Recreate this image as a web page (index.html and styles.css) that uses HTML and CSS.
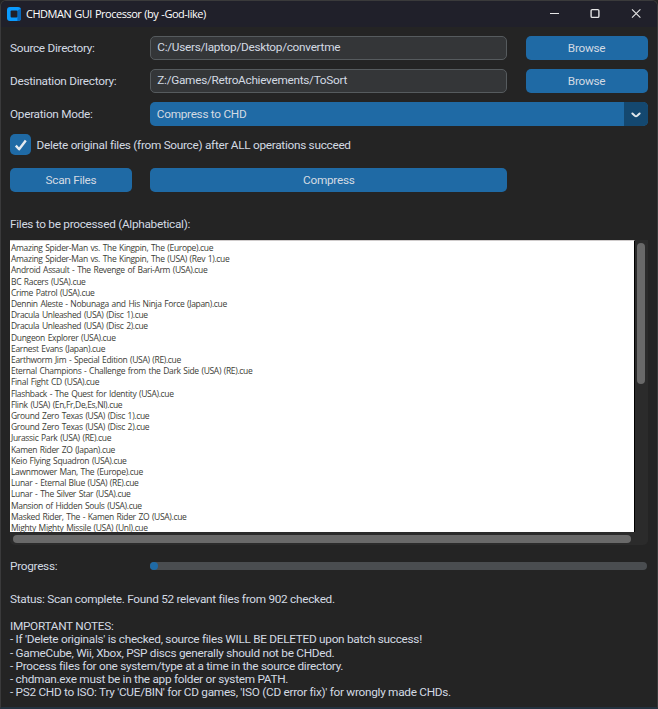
FILE: index.html
```html
<!DOCTYPE html>
<html lang="en">
<head>
<meta charset="utf-8">
<title>CHDMAN GUI Processor</title>
<link rel="stylesheet" href="styles.css">
</head>
<body>
<div class="window">
  <header class="titlebar">
    <svg class="logo" viewBox="0 0 14 14"><rect width="14" height="14" rx="3" fill="#0a9bff"/><path d="M10.4 3.6L14 1.5V11a3 3 0 0 1-3 3h-.6z" fill="#0869bd"/><rect x="3.6" y="3.6" width="6.8" height="6.8" rx="1" fill="#20202a"/></svg>
    <span class="title">CHDMAN GUI Processor (by -God-like)</span>
    <svg class="controls" viewBox="0 0 100 14" fill="none" stroke="#e6e6e6"><path d="M4 6.5h9" stroke-width="1.2"/><rect x="45.1" y="2.6" width="7.8" height="7.8" rx="1.2" stroke-width="1.4"/><path d="M86 2.3l8.4 8.4M94.4 2.3L86 10.7" stroke-width="1.1"/></svg>
  </header>
  <main class="content">
    <div class="form">
      <span class="label">Source Directory:</span>
      <div class="entry">C:/Users/laptop/Desktop/convertme</div>
      <button class="button">Browse</button>
      <span class="label">Destination Directory:</span>
      <div class="entry">Z:/Games/RetroAchievements/ToSort</div>
      <button class="button">Browse</button>
      <span class="label">Operation Mode:</span>
      <div class="select"><span class="value">Compress to CHD</span><span class="arrow"><svg viewBox="0 0 10 6"><path d="M1.4 1.5L3.8 3.7Q5 4.6 6.2 3.7L8.6 1.5" fill="none" stroke="#e1e7eb" stroke-width="2" stroke-linecap="round"/></svg></span></div>
    </div>
    <div class="check">
      <span class="box"><svg viewBox="0 0 21 21"><path d="M5.8 11.6l3.3 3.7L15.8 6.6" fill="none" stroke="#e4eaf0" stroke-width="2.4" stroke-linecap="butt" stroke-linejoin="round"/></svg></span>
      <span>Delete original files (from Source) after ALL operations succeed</span>
    </div>
    <div class="actions"><button class="button">Scan Files</button><button class="button">Compress</button></div>
    <div class="files-label">Files to be processed (Alphabetical):</div>
    <div class="files">
      <ul class="list">
        <li>Amazing Spider-Man vs. The Kingpin, The (Europe).cue</li>
        <li>Amazing Spider-Man vs. The Kingpin, The (USA) (Rev 1).cue</li>
        <li>Android Assault - The Revenge of Bari-Arm (USA).cue</li>
        <li>BC Racers (USA).cue</li>
        <li>Crime Patrol (USA).cue</li>
        <li>Dennin Aleste - Nobunaga and His Ninja Force (Japan).cue</li>
        <li>Dracula Unleashed (USA) (Disc 1).cue</li>
        <li>Dracula Unleashed (USA) (Disc 2).cue</li>
        <li>Dungeon Explorer (USA).cue</li>
        <li>Earnest Evans (Japan).cue</li>
        <li>Earthworm Jim - Special Edition (USA) (RE).cue</li>
        <li>Eternal Champions - Challenge from the Dark Side (USA) (RE).cue</li>
        <li>Final Fight CD (USA).cue</li>
        <li>Flashback - The Quest for Identity (USA).cue</li>
        <li>Flink (USA) (En,Fr,De,Es,Nl).cue</li>
        <li>Ground Zero Texas (USA) (Disc 1).cue</li>
        <li>Ground Zero Texas (USA) (Disc 2).cue</li>
        <li>Jurassic Park (USA) (RE).cue</li>
        <li>Kamen Rider ZO (Japan).cue</li>
        <li>Keio Flying Squadron (USA).cue</li>
        <li>Lawnmower Man, The (Europe).cue</li>
        <li>Lunar - Eternal Blue (USA) (RE).cue</li>
        <li>Lunar - The Silver Star (USA).cue</li>
        <li>Mansion of Hidden Souls (USA).cue</li>
        <li>Masked Rider, The - Kamen Rider ZO (USA).cue</li>
        <li>Mighty Mighty Missile (USA) (Unl).cue</li>
      </ul>
      <div class="vtrack"><div class="vthumb"></div></div>
      <div class="htrack"><div class="hthumb"></div></div>
    </div>
    <div class="progress"><span class="label">Progress:</span><div class="bar"><div class="fill"></div></div></div>
    <div class="status">Status: Scan complete. Found 52 relevant files from 902 checked.</div>
    <div class="notes">
      <div>IMPORTANT NOTES:</div>
      <div>- If 'Delete originals' is checked, source files WILL BE DELETED upon batch success!</div>
      <div>- GameCube, Wii, Xbox, PSP discs generally should not be CHDed.</div>
      <div>- Process files for one system/type at a time in the source directory.</div>
      <div>- chdman.exe must be in the app folder or system PATH.</div>
      <div>- PS2 CHD to ISO: Try 'CUE/BIN' for CD games, 'ISO (CD error fix)' for wrongly made CHDs.</div>
    </div>
  </main>
</div>
</body>
</html>
```
FILE: styles.css
```css
* { box-sizing: border-box; }
body { margin: 0; background: #242424; }
.window {
  width: 658px;
  height: 709px;
  border: 1px solid #3a3a3b;
  border-bottom: 2px solid #24323f;
  border-radius: 6px 6px 0 0;
  overflow: hidden;
  background: #242424;
  color: #d3dae3;
  font: 11.8px/14px Roboto, sans-serif;
  letter-spacing: -0.285px;
}
.titlebar {
  display: flex;
  align-items: center;
  height: 26px;
  padding: 0 11px 0 6px;
  background: #20202a;
}
.logo { width: 14px; height: 14px; }
.title {
  flex: 1;
  margin-left: 5px;
  color: #fff;
  font: 11px/14px "Open Sans", sans-serif;
  letter-spacing: -0.48px;
  word-spacing: 0.6px;
}
.controls { width: 100px; height: 14px; }
.content { padding: 9px 9px 0; }
.form {
  display: grid;
  grid-template-columns: 140.3px 375.3px 122px;
  grid-template-rows: repeat(3, 24px);
  row-gap: 9px;
  align-items: center;
}
.entry {
  width: 357px;
  height: 24px;
  padding: 0 6px;
  border: 1px solid #565b5e;
  border-radius: 5px;
  background: #343638;
  line-height: 21px;
}
.button {
  height: 24px;
  padding: 0 0 1px;
  border: 0;
  border-radius: 5px;
  background: #1f6aa5;
  color: #d3dae3;
  font: inherit;
  letter-spacing: inherit;
}
.select {
  grid-column: 2 / 4;
  display: flex;
  height: 24px;
  overflow: hidden;
  border-radius: 5px;
  background: #1f6aa5;
  line-height: 24px;
}
.value { flex: 1; padding-left: 6.5px; }
.arrow {
  display: flex;
  align-items: center;
  justify-content: center;
  width: 24px;
  padding-top: 1px;
  background: #144870;
}
.arrow svg { width: 10px; height: 6px; }
.check {
  display: flex;
  align-items: center;
  gap: 5.5px;
  height: 21px;
  margin-top: 8.4px;
}
.box {
  width: 21px;
  height: 21px;
  border-radius: 5px;
  background: #1f6aa5;
}
.box svg { display: block; }
.actions {
  display: grid;
  grid-template-columns: 122px 357px;
  column-gap: 18.3px;
  margin-top: 13px;
}
.files-label { margin-top: 24.6px; }
.files {
  display: grid;
  grid-template: 292px 13px / 625px 13px;
  margin-top: 9px;
  border-radius: 0 0 5px 5px;
  background: #2b2b2b;
}
.list {
  margin: 0;
  padding: 1px 0 0 1px;
  overflow: hidden;
  border-top: 1px solid #d0cccc;
  border-right: 1px solid #000;
  background: #fff;
  color: #3c3c36;
  font: 8.5px/11.2px "Open Sans", sans-serif;
  letter-spacing: -0.33px;
  word-spacing: 0.8px;
  list-style: none;
  white-space: nowrap;
}
.vtrack { padding: 3px 2px; }
.vthumb { width: 8px; height: 141px; border-radius: 4px; background: #696969; }
.htrack { grid-column: 1 / 3; padding: 3px; }
.hthumb { width: 618px; height: 8px; border-radius: 4px; background: #696969; }
.progress {
  display: grid;
  grid-template-columns: 140.3px 497px;
  align-items: center;
  margin-top: 14px;
}
.bar { height: 8px; border-radius: 4px; background: #4a4d50; }
.fill { width: 8px; height: 8px; border-radius: 4px; background: #1f6aa5; }
.status { margin-top: 19px; }
.notes { margin-top: 14px; line-height: 13.3px; }
```
